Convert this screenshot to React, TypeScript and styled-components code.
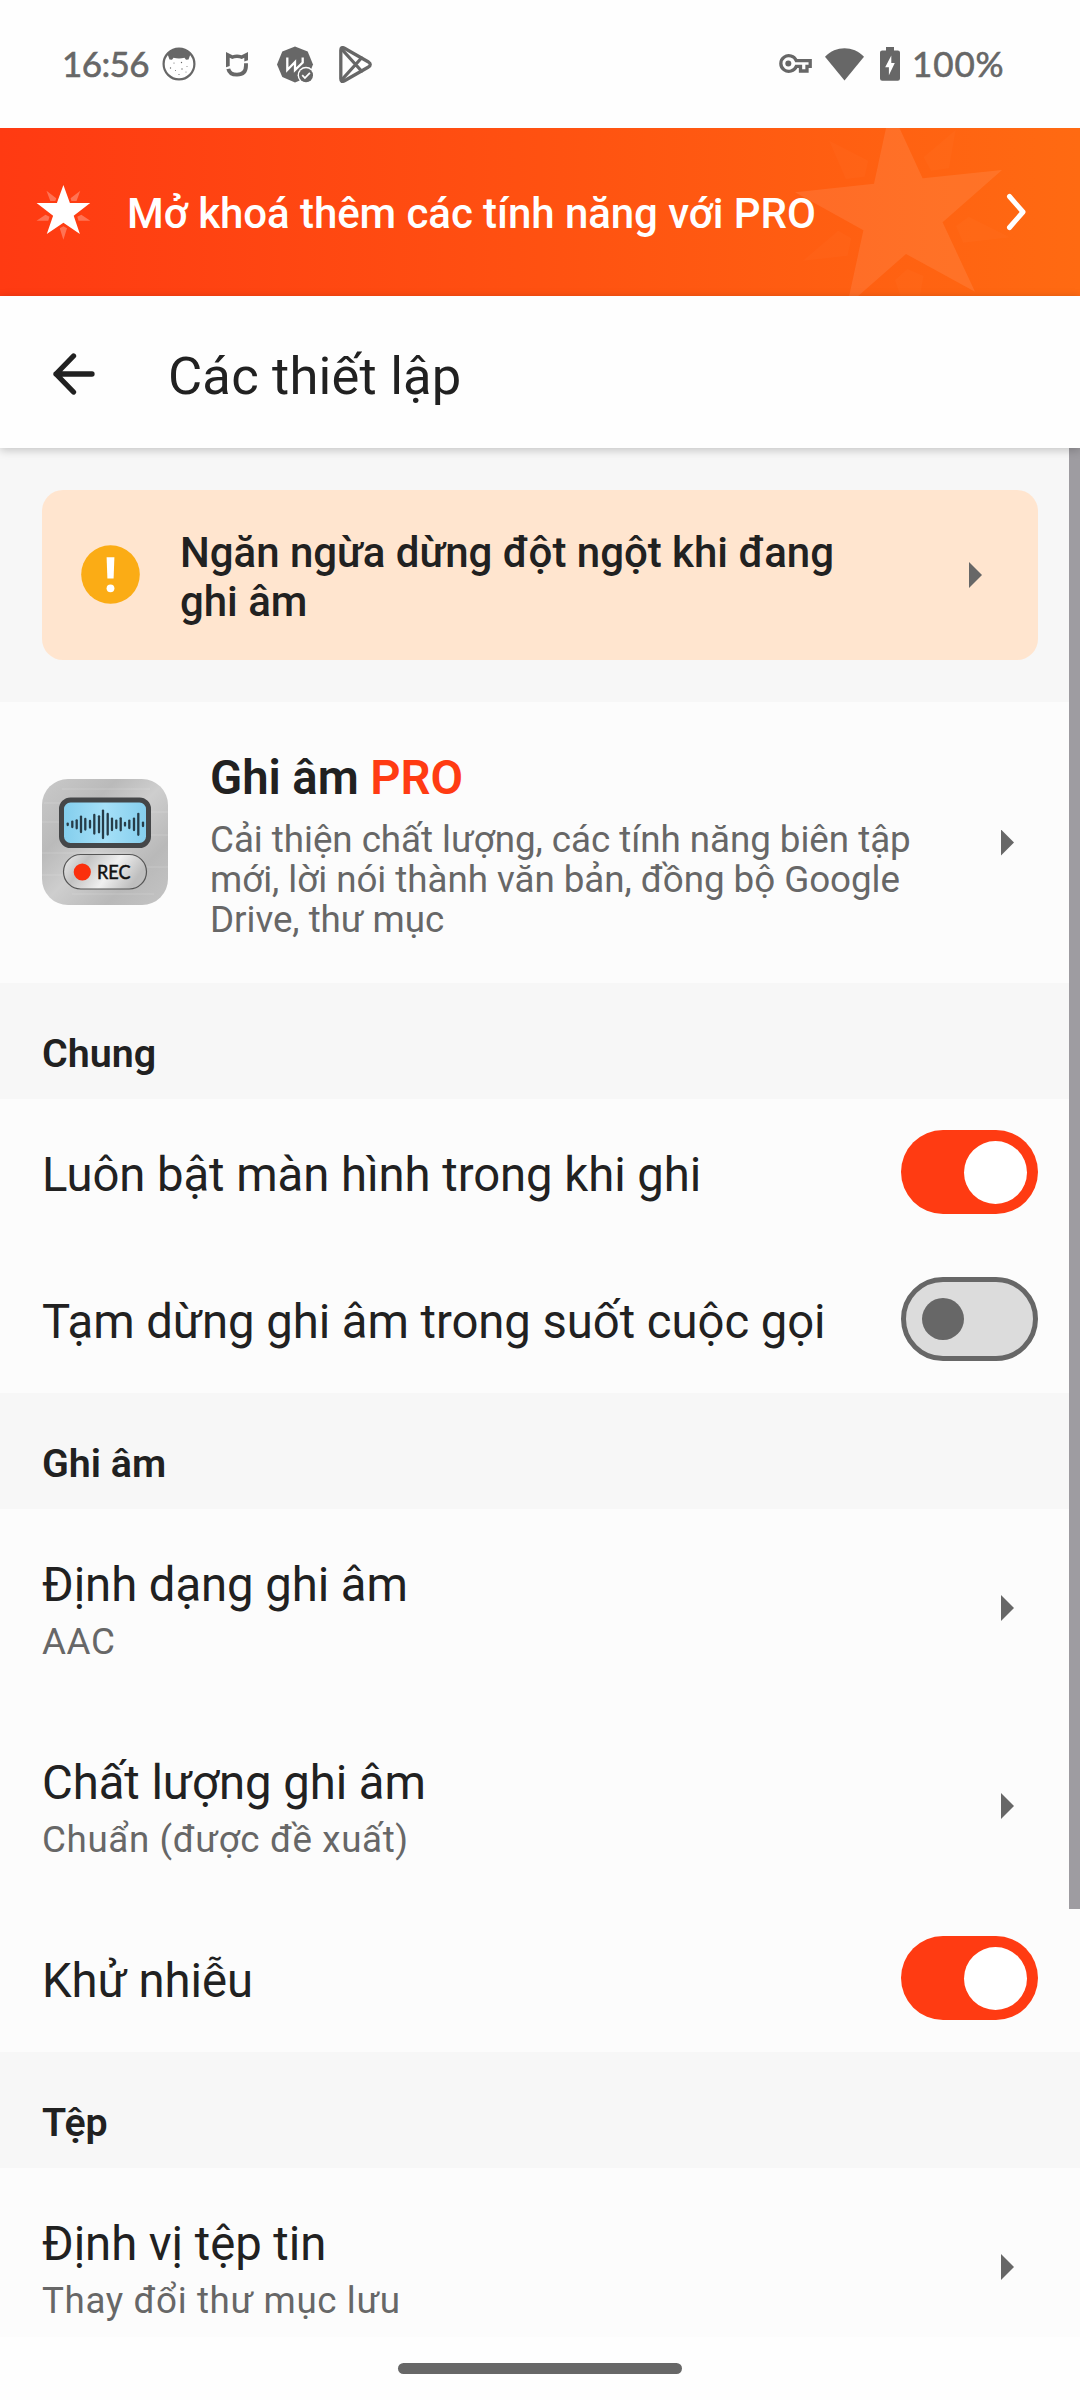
import React from "react";
import styled, { createGlobalStyle } from "styled-components";

const GlobalStyle = createGlobalStyle`
  *, *::before, *::after { box-sizing: border-box; }
  html, body { margin: 0; padding: 0; background: #fff; }
`;

const Screen = styled.div`
  display: flex;
  flex-direction: column;
  width: 1080px;
  height: 2400px;
  overflow: hidden;
  background: #fefefe;
  color: #212121;
  font-family: Roboto, "Noto Sans", sans-serif;
`;

const StatusBar = styled.header`
  display: flex;
  align-items: center;
  justify-content: space-between;
  height: 128px;
  flex: none;
  padding: 0 76px 0 62px;
  color: #676767;
  svg { display: block; flex: none; }
`;

const StatusGroup = styled.div`
  display: flex;
  align-items: center;
  height: 40px;
`;

const StatusText = styled.span<{ $spacing: number; $width: number; $indent?: number }>`
  width: ${(p) => p.$width}px;
  margin-top: -3px;
  padding-left: ${(p) => p.$indent ?? 0}px;
  font-family: Lato, sans-serif;
  font-size: 35px;
  font-weight: 400;
  line-height: 40px;
  letter-spacing: ${(p) => p.$spacing}px;
  white-space: nowrap;
  -webkit-text-stroke: 0.6px currentColor;
`;

const Banner = styled.section`
  position: relative;
  display: flex;
  align-items: center;
  flex: none;
  height: 168px;
  padding: 0 53px 0 36px;
  background: linear-gradient(90deg, #ff3a12 0%, #ff5111 50%, #ff6a12 100%);
  color: #fff;
  svg { display: block; }
`;

const BannerArt = styled.svg`
  position: absolute;
  top: 0;
  right: 60px;
`;

const BannerText = styled.span`
  position: relative;
  flex: 1;
  margin: 3px 0 0 35px;
  font-size: 42px;
  font-weight: 500;
  line-height: 50px;
  letter-spacing: -0.07px;
  white-space: nowrap;
`;

const TitleBar = styled.div`
  position: relative;
  z-index: 1;
  display: flex;
  align-items: center;
  flex: none;
  height: 152px;
  padding: 4px 0 0 53px;
  background: #fefefe;
  box-shadow: 0 2px 9px rgba(0, 0, 0, 0.22);
`;

const Title = styled.h1`
  margin: 4px 0 0 73px;
  font-size: 52.5px;
  font-weight: 400;
  line-height: 62px;
  letter-spacing: 0.2px;
`;

const Body = styled.main`
  position: relative;
  flex: none;
  height: 1889px;
  padding-top: 42px;
  overflow: hidden;
  background: #f7f7f7;
`;

const ScrollThumb = styled.div`
  position: absolute;
  top: 0;
  right: 0;
  width: 11px;
  height: 1461px;
  background: #9e9ca1;
`;

const WarningCard = styled.section`
  display: flex;
  align-items: center;
  height: 170px;
  margin: 0 42px 42px;
  padding: 0 56px 0 39px;
  border-radius: 21px;
  background: #ffe5cf;
  svg { display: block; flex: none; margin-bottom: 1px; }
`;

const WarningText = styled.p`
  flex: 1;
  margin: 3px 0 0 40px;
  font-size: 42px;
  font-weight: 500;
  line-height: 49px;
  letter-spacing: -0.02px;
`;

const Caret = styled.span`
  flex: none;
  width: 13px;
  height: 26px;
  background: #676767;
  clip-path: polygon(0 0, 100% 50%, 0 100%);
`;

const ProRow = styled.section`
  display: flex;
  align-items: center;
  height: 281px;
  padding: 0 66px 0 42px;
  background: #fcfcfc;
  svg { display: block; flex: none; margin-bottom: 1px; }
`;

const ProCopy = styled.div`
  flex: 1;
  margin: 6px 0 0 42px;
`;

const ProTitle = styled.h2`
  margin: 0;
  font-size: 47.25px;
  font-weight: 600;
  line-height: 55px;
  letter-spacing: -0.06px;
`;

const Accent = styled.span`
  color: #ff3b12;
`;

const Summary = styled.p<{ $lead: number; $top: number; $spacing: number }>`
  margin: ${(p) => p.$top}px 0 0;
  color: #676767;
  font-size: 36.75px;
  line-height: ${(p) => p.$lead}px;
  letter-spacing: ${(p) => p.$spacing}px;
`;

const SectionTitle = styled.h3`
  height: 116px;
  margin: 0;
  padding: 48px 42px 0;
  font-size: 39.375px;
  font-weight: 600;
  line-height: 46px;
`;

const Row = styled.div<{ $height: number; $end: number }>`
  display: flex;
  align-items: center;
  justify-content: space-between;
  height: ${(p) => p.$height}px;
  padding: 0 ${(p) => p.$end}px 0 42px;
  background: #fcfcfc;
`;

const RowCopy = styled.div<{ $shift: number }>`
  margin-top: ${(p) => p.$shift}px;
`;

const RowTitle = styled.div`
  font-size: 47.25px;
  line-height: 55px;
  letter-spacing: -0.05px;
  white-space: nowrap;
`;

const Switch = styled.span<{ $on: boolean }>`
  display: flex;
  align-items: center;
  justify-content: ${(p) => (p.$on ? "flex-end" : "flex-start")};
  width: 137px;
  height: 84px;
  margin-bottom: 1px;
  padding: ${(p) => (p.$on ? "0 11px" : "0 16px")};
  border: ${(p) => (p.$on ? "0" : "5px solid #676767")};
  border-radius: 42px;
  background: ${(p) => (p.$on ? "#ff3b12" : "#dcdcdc")};
`;

const Knob = styled.span<{ $on: boolean }>`
  width: ${(p) => (p.$on ? 63 : 42)}px;
  height: ${(p) => (p.$on ? 63 : 42)}px;
  border-radius: 50%;
  background: ${(p) => (p.$on ? "#fff" : "#676767")};
`;

const NavBar = styled.footer`
  display: flex;
  justify-content: center;
  flex: none;
  height: 63px;
  padding-top: 26px;
`;

const Handle = styled.span`
  width: 284px;
  height: 11px;
  border-radius: 5.5px;
  background: #676767;
`;

const StatusIcon = styled.svg<{ $before: number }>`
  margin-left: ${(p) => p.$before}px;
`;

const NotificationIcons = () => (
  <>
    <StatusIcon $before={0} width="34" height="34" viewBox="0 0 34 34">
      <circle cx="17" cy="17" r="15.4" fill="#fff" stroke="#676767" strokeWidth="2.2" />
      <path d="M5.500 7Q10 2 17 2t11.500 5L26.500 12.500 24 12.800 22.500 10.800Q17 12 11.500 10.800L10 12.800 7.500 12.500z" fill="#676767" />
      <g fill="#676767">
        <circle cx="12" cy="16" r=".6" /><circle cx="19.500" cy="15.500" r=".7" />
        <circle cx="8.500" cy="21" r=".7" /><circle cx="13.500" cy="23.500" r=".5" />
        <circle cx="20" cy="22" r=".7" /><circle cx="25" cy="19.500" r=".5" />
        <circle cx="17" cy="27.500" r=".6" /><circle cx="24" cy="25" r=".5" />
      </g>
    </StatusIcon>
    <StatusIcon $before={30} width="22" height="25" viewBox="0 0 22 25">
      <path d="M0 0L6.500 3.200Q11 1.800 15.500 3.200L22 0V8.200L18.300 9.600V5.800L15.800 7Q11 5.200 6.200 7L3.700 5.800V14L0 15.200z" fill="#676767" />
      <path d="M2.300 16.800Q3.500 22.600 11 22.600 20 22.600 20 13.500V11.200" fill="none" stroke="#676767" strokeWidth="3.900" />
    </StatusIcon>
    <StatusIcon $before={29} width="37" height="37" viewBox="0 0 37 37">
      <path d="M18 .5L30.700 5.500 36 18.500 31 31 18 36.500 5.300 31 0 18.500 5.300 5.500z" fill="#676767" />
      <path d="M10.300 11.500V24L18 16V24L25.700 16.500V11.500" fill="none" stroke="#fff" strokeWidth="2.300" />
      <circle cx="29" cy="29.200" r="8.400" fill="#fefefe" />
      <circle cx="29" cy="29.200" r="7" fill="#676767" />
      <path d="M25.200 29.200l2.700 2.800 5-5.200" fill="none" stroke="#fff" strokeWidth="1.800" />
    </StatusIcon>
    <StatusIcon $before={25} width="33" height="37" viewBox="0 0 33 37">
      <g fill="none" stroke="#676767" strokeWidth="3.300" strokeLinejoin="round" strokeLinecap="round">
        <path d="M1.800 4.300Q1.800.3 5.500 2.200L29.500 16Q33 18.500 29.500 21L5.500 34.800Q1.800 36.700 1.800 32.700z" />
        <path d="M3 3.500L22.500 25M3 33.500L22.500 12" />
      </g>
    </StatusIcon>
  </>
);

const SystemIcons = () => (
  <>
    <StatusIcon $before={0} width="33" height="20" viewBox="0 0 33 20">
      <path d="M17.300 6.700H31.200V12.300H28V17H21.500V12.300H17.300A8 7.800 0 1 1 17.300 6.700Z" fill="none" stroke="#676767" strokeWidth="3.300" />
      <circle cx="9.300" cy="9.500" r="3" fill="#676767" />
    </StatusIcon>
    <StatusIcon $before={13} width="39" height="33" viewBox="0 0 39 33">
      <path d="M0 8.700C11-2.500 28-2.500 39 8.700L19.500 32.500z" fill="#676767" />
    </StatusIcon>
    <StatusIcon $before={16} width="20" height="34" viewBox="0 0 20 34">
      <path d="M6 0h8v3.400h3.800Q20 3.400 20 5.600v26Q20 33.800 17.800 33.800H2.200Q0 33.800 0 31.600v-26Q0 3.400 2.200 3.400H6z" fill="#676767" />
      <path d="M11.300 8.500V16h3.500L8.900 28.300V20.300H5.200z" fill="#fff" />
    </StatusIcon>
  </>
);

const SmallStar = () => (
  <svg width="56" height="56" viewBox="36 184 56 56">
    <path d="M63.400 185L69.900 203H90.200L73.700 215.700 79.900 234 63.400 222.700 46.800 234 53.100 215.700 36.600 203H56.900z" fill="#fff" />
    <g fill="#fff" opacity=".28">
      <path d="M46.500 190.700L56.200 198.300 55.400 201H50.300z" />
      <path d="M80.300 190.700L70.600 198.300 71.400 201H76.500z" />
      <path d="M90.300 220.700L81.300 214.700 77.300 216.700 78.500 220.700z" />
      <path d="M36.500 220.700L45.500 214.700 49.500 216.700 48.300 220.700z" />
      <path d="M63.400 239.700L59.800 228.300 63.400 226.300 67 228.300z" />
    </g>
  </svg>
);

const BigStar = () => (
  <BannerArt width="240" height="168" viewBox="780 128 240 168">
    <path d="M890.300 108L922.600 178.300 1002 170 942.600 222.300 975 291.700 906 254 847 305.800 863.400 230.300 795 192.300 874 183.700z" fill="#fff" opacity=".09" />
    <g fill="#fff" opacity=".016">
      <path d="M829.300 140.700L868.200 160.700 864.700 176.700 845.800 179z" />
      <path d="M955.600 130L949 168.300 931.200 170.700 923.600 157.300z" />
      <path d="M1009.400 237.300L968.700 216.700 956 226 963.200 242.700z" />
      <path d="M803 260.700L838.200 230.700 851.300 238.300 847.500 255.700z" />
      <path d="M907.400 269L923.600 276 919.800 296H900.500L895 280z" />
    </g>
  </BannerArt>
);

const bars: [number, number][] = [
  [25.7, 1.7], [30.3, 3.7], [34.7, 5], [39, 8.7], [43.3, 6.3], [48, 4.3],
  [52.3, 10.3], [57, 9], [61, 14.7], [65.7, 11.3], [70, 6.7], [74.3, 4.7],
  [78.7, 7], [83, 2.3], [87.3, 4.7], [92, 6.7], [96.3, 11.5], [101, 2.7],
];

const AppIcon = () => (
  <svg width="126" height="126" viewBox="0 0 126 126">
    <defs>
      <linearGradient id="metal" x1="0" y1="0" x2="1" y2="1">
        <stop offset="0" stopColor="#c9c9c9" />
        <stop offset=".3" stopColor="#bababa" />
        <stop offset=".5" stopColor="#cecece" />
        <stop offset=".75" stopColor="#b9b9b9" />
        <stop offset="1" stopColor="#c4c4c4" />
      </linearGradient>
      <linearGradient id="glass" x1="0" y1="0" x2="1" y2="0">
        <stop offset="0" stopColor="#82cdec" />
        <stop offset=".5" stopColor="#a5e0f8" />
        <stop offset="1" stopColor="#84cdec" />
      </linearGradient>
      <linearGradient id="button" x1="0" y1="0" x2="1" y2=".3">
        <stop offset="0" stopColor="#eeeeee" />
        <stop offset=".3" stopColor="#c2c2c2" />
        <stop offset=".65" stopColor="#f0f0f0" />
        <stop offset="1" stopColor="#bebebe" />
      </linearGradient>
    </defs>
    <rect width="126" height="126" rx="26" fill="url(#metal)" />
    <g stroke="#fff" strokeWidth=".8" opacity=".22">
      <path d="M2 24H80M20 10H108M0 43H60M50 56H126M0 74H90M30 115H112M0 96H60M70 88H126M80 33H126" />
    </g>
    <rect x="19.500" y="21" width="87" height="45.500" rx="9" fill="url(#glass)" stroke="#444648" strokeWidth="5" />
    <g stroke="#263c48" strokeWidth="2.300" strokeLinecap="round">
      {bars.map(([x, h]) => (
        <line key={x} x1={x} x2={x} y1={45.3 - h + 1} y2={45.3 + h - 1} />
      ))}
    </g>
    <rect x="21.500" y="75.500" width="83" height="34.500" rx="17.250" fill="url(#button)" stroke="#555" strokeWidth="1.200" />
    <circle cx="40.300" cy="93" r="8.600" fill="#fb2f0c" />
    <text x="55" y="99.500" fontFamily="Lato, sans-serif" fontSize="18.500" fontWeight="400" fill="#111" stroke="#111" strokeWidth=".5" textLength="33.500" lengthAdjust="spacingAndGlyphs">REC</text>
  </svg>
);

const Toggle = ({ on }: { on: boolean }) => (
  <Switch $on={on} role="switch" aria-checked={on}>
    <Knob $on={on} />
  </Switch>
);

const ToggleRow = ({ title, on }: { title: string; on: boolean }) => (
  <Row $height={147} $end={42}>
    <RowCopy $shift={6}><RowTitle>{title}</RowTitle></RowCopy>
    <Toggle on={on} />
  </Row>
);

const LinkRow = ({ title, summary }: { title: string; summary: string }) => (
  <Row $height={198} $end={66}>
    <RowCopy $shift={5}>
      <RowTitle>{title}</RowTitle>
      <Summary $lead={43} $top={7} $spacing={0.62}>{summary}</Summary>
    </RowCopy>
    <Caret />
  </Row>
);

export default function App() {
  return (
    <Screen>
      <GlobalStyle />
      <StatusBar>
        <StatusGroup>
          <StatusText $spacing={-0.6} $width={100}>16:56</StatusText>
          <NotificationIcons />
        </StatusGroup>
        <StatusGroup>
          <SystemIcons />
          <StatusText $spacing={0.9} $width={104} $indent={12}>100%</StatusText>
        </StatusGroup>
      </StatusBar>

      <Banner>
        <BigStar />
        <SmallStar />
        <BannerText>Mở khoá thêm các tính năng với PRO</BannerText>
        <svg width="21" height="38" viewBox="0 0 21 38">
          <path d="M3.500 3.500L17 19 3.500 34.500" fill="none" stroke="#fff" strokeWidth="5" strokeLinecap="round" strokeLinejoin="round" />
        </svg>
      </Banner>

      <TitleBar>
        <svg width="42" height="42" viewBox="0 0 42 42">
          <path d="M20.500 3L3 21 20.500 39M3 21H39" fill="none" stroke="#212121" strokeWidth="5.300" strokeLinecap="round" strokeLinejoin="round" />
        </svg>
        <Title>Các thiết lập</Title>
      </TitleBar>

      <Body>
        <WarningCard>
          <svg width="59" height="59" viewBox="0 0 59 59">
            <circle cx="29.500" cy="29.500" r="29.300" fill="#fbac15" />
            <path d="M25.600 12.300H33.400L32.600 33.500H26.400z" fill="#fff" />
            <circle cx="29.500" cy="43.300" r="3.900" fill="#fff" />
          </svg>
          <WarningText>Ngăn ngừa dừng đột ngột khi đang<br />ghi âm</WarningText>
          <Caret />
        </WarningCard>

        <ProRow>
          <AppIcon />
          <ProCopy>
            <ProTitle>Ghi âm <Accent>PRO</Accent></ProTitle>
            <Summary $lead={40} $top={14} $spacing={-0.04}>
              Cải thiện chất lượng, các tính năng biên tập<br />
              mới, lời nói thành văn bản, đồng bộ Google<br />
              Drive, thư mục
            </Summary>
          </ProCopy>
          <Caret />
        </ProRow>

        <SectionTitle>Chung</SectionTitle>
        <ToggleRow title="Luôn bật màn hình trong khi ghi" on />
        <ToggleRow title="Tạm dừng ghi âm trong suốt cuộc gọi" on={false} />

        <SectionTitle>Ghi âm</SectionTitle>
        <LinkRow title="Định dạng ghi âm" summary="AAC" />
        <LinkRow title="Chất lượng ghi âm" summary="Chuẩn (được đề xuất)" />
        <ToggleRow title="Khử nhiễu" on />

        <SectionTitle>Tệp</SectionTitle>
        <LinkRow title="Định vị tệp tin" summary="Thay đổi thư mục lưu" />
        <ScrollThumb />
      </Body>

      <NavBar><Handle /></NavBar>
    </Screen>
  );
}
